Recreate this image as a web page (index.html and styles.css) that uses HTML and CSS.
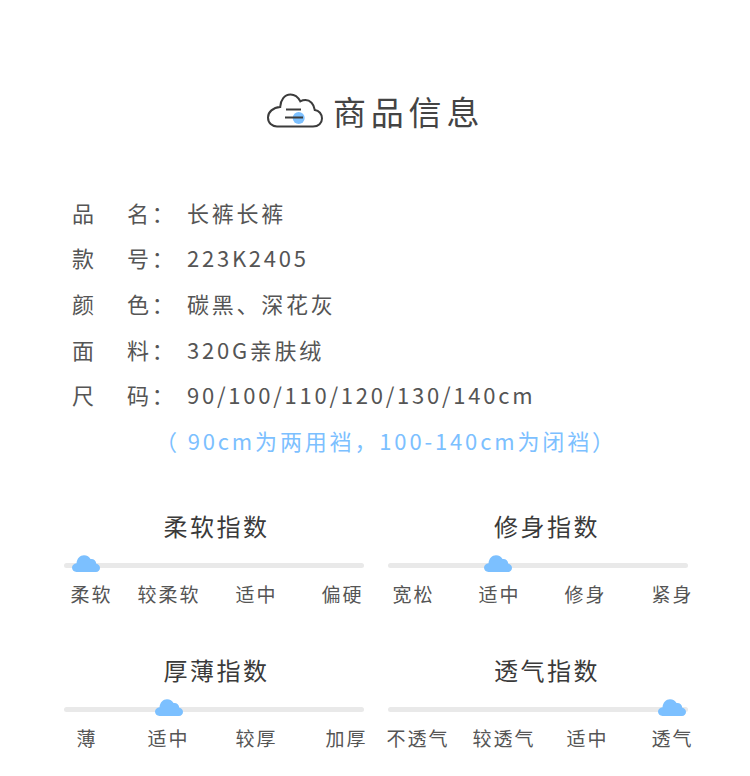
FILE: index.html
```html
<!DOCTYPE html>
<html lang="zh">
<head>
<meta charset="utf-8">
<title>商品信息</title>
<link rel="stylesheet" href="styles.css">
</head>
<body>
<main class="page">
  <header class="heading">
    <svg class="heading-icon" viewBox="0 0 56 36" width="56" height="36" aria-hidden="true">
      <circle cx="31.700" cy="25" r="6" fill="#7cc0ff"/>
      <path d="M10 33.500H46C51.500 33.500 55 30 55 25.500C55 21 52 17.500 47.800 17C47 11 43 7 38.500 7C36.500 7 34.800 7.500 33.300 8.300C31 4 27.500 1.500 23.500 1.500C17.500 1.500 13.500 7 13.200 14C6 14.500 1 19 1 24.500C1 30 5 33.500 10 33.500Z" fill="none" stroke="#3c3c3c" stroke-width="2"/>
      <path d="M19 16.500H34M18 24.500H36" fill="none" stroke="#3c3c3c" stroke-width="2"/>
    </svg>
    <h1 class="heading-text">商品信息</h1>
  </header>

  <dl class="specs">
    <div class="spec"><dt class="spec-label"><span>品</span><span>名：</span></dt><dd class="spec-value">长裤长裤</dd></div>
    <div class="spec"><dt class="spec-label"><span>款</span><span>号：</span></dt><dd class="spec-value">223K2405</dd></div>
    <div class="spec"><dt class="spec-label"><span>颜</span><span>色：</span></dt><dd class="spec-value">碳黑、深花灰</dd></div>
    <div class="spec"><dt class="spec-label"><span>面</span><span>料：</span></dt><dd class="spec-value">320G亲肤绒</dd></div>
    <div class="spec"><dt class="spec-label"><span>尺</span><span>码：</span></dt><dd class="spec-value">90/100/110/120/130/140cm</dd></div>
  </dl>
  <p class="note">（ 90cm为两用裆，100-140cm为闭裆）</p>

  <section class="indices">
    <div class="index index-left">
      <h2 class="index-title">柔软指数</h2>
      <div class="track">
        <svg class="cloud cloud-soft" viewBox="0 0 28 17" aria-hidden="true"><path d="M4.500 17C2 17 0 15 0 12.800C0 10.300 2 8.500 4.500 8.300C5 3.500 8 0.300 12 0.300C15 0.300 17.300 2 18.500 4C21.500 3.500 24 5.500 24.300 8.800C26.500 9.300 28 11 28 13C28 15.200 26.300 17 24 17Z" fill="#7cc0ff"/></svg>
      </div>
      <div class="scale scale-soft"><span>柔软</span><span>较柔软</span><span>适中</span><span>偏硬</span></div>
    </div>
    <div class="index index-right">
      <h2 class="index-title">修身指数</h2>
      <div class="track">
        <svg class="cloud cloud-fit" viewBox="0 0 28 17" aria-hidden="true"><path d="M4.500 17C2 17 0 15 0 12.800C0 10.300 2 8.500 4.500 8.300C5 3.500 8 0.300 12 0.300C15 0.300 17.300 2 18.500 4C21.500 3.500 24 5.500 24.300 8.800C26.500 9.300 28 11 28 13C28 15.200 26.300 17 24 17Z" fill="#7cc0ff"/></svg>
      </div>
      <div class="scale scale-fit"><span>宽松</span><span>适中</span><span>修身</span><span>紧身</span></div>
    </div>
    <div class="index index-left">
      <h2 class="index-title">厚薄指数</h2>
      <div class="track">
        <svg class="cloud cloud-thick" viewBox="0 0 28 17" aria-hidden="true"><path d="M4.500 17C2 17 0 15 0 12.800C0 10.300 2 8.500 4.500 8.300C5 3.500 8 0.300 12 0.300C15 0.300 17.300 2 18.500 4C21.500 3.500 24 5.500 24.300 8.800C26.500 9.300 28 11 28 13C28 15.200 26.300 17 24 17Z" fill="#7cc0ff"/></svg>
      </div>
      <div class="scale scale-thick"><span>薄</span><span>适中</span><span>较厚</span><span>加厚</span></div>
    </div>
    <div class="index index-right">
      <h2 class="index-title">透气指数</h2>
      <div class="track">
        <svg class="cloud cloud-air" viewBox="0 0 28 17" aria-hidden="true"><path d="M4.500 17C2 17 0 15 0 12.800C0 10.300 2 8.500 4.500 8.300C5 3.500 8 0.300 12 0.300C15 0.300 17.300 2 18.500 4C21.500 3.500 24 5.500 24.300 8.800C26.500 9.300 28 11 28 13C28 15.200 26.300 17 24 17Z" fill="#7cc0ff"/></svg>
      </div>
      <div class="scale scale-air"><span>不透气</span><span>较透气</span><span>适中</span><span>透气</span></div>
    </div>
  </section>
</main>
</body>
</html>
```
FILE: styles.css
```css
* { box-sizing: border-box; margin: 0; padding: 0; }
html, body { background: #fff; }
body {
  font-family: "Noto Sans CJK SC", "Noto Sans", sans-serif;
  font-weight: 400;
  color: #555;
  overflow: hidden;
}
.page { width: 750px; height: 776px; overflow: hidden; padding-top: 91px; }
.heading { display: flex; align-items: center; gap: 10px; padding-left: 267px; height: 40px; }
.heading-icon { flex: none; }
.heading-text { font-size: 33px; font-weight: 400; letter-spacing: 4.800px; line-height: 40px; color: #444; white-space: nowrap; }
.specs { margin-top: 58px; padding-left: 72px; }
.spec { display: flex; height: 45.600px; align-items: center; font-size: 22px; letter-spacing: 2.750px; }
.spec-label { display: grid; grid-template-columns: 55px auto; width: 115px; flex: none; }
.spec-value { white-space: nowrap; }
.note { height: 46px; line-height: 46px; font-size: 22px; letter-spacing: 2.850px; color: #7cc0ff; padding-left: 155px; white-space: nowrap; }
.indices { display: grid; grid-template-columns: 300px 300px; column-gap: 24px; margin: 43px 0 0 64px; }
.index { height: 144px; }
.index-title { height: 40px; line-height: 40px; font-size: 24px; font-weight: 400; letter-spacing: 2.500px; color: #3a3a3a; text-align: center; white-space: nowrap; }
.index-left .index-title { padding-left: 5px; }
.index-right .index-title { padding-left: 18px; }
.track { position: relative; height: 5px; margin-top: 17px; background: #e9e9e9; border-radius: 3px; }
.cloud { position: absolute; width: 28px; height: 17px; top: -8px; }
.cloud-soft { left: 8px; }
.cloud-fit { left: 96px; }
.cloud-thick { left: 91px; }
.cloud-air { left: 270px; }
.scale { display: grid; margin-top: 14px; font-size: 19px; letter-spacing: 2px; line-height: 24px; white-space: nowrap; }
.scale-soft { grid-template-columns: 67px 98px 86px auto; padding-left: 6.500px; }
.scale-fit { grid-template-columns: 86px 86px 87px auto; padding-left: 4.500px; }
.scale-thick { grid-template-columns: 71px 88px 90px auto; padding-left: 12.500px; }
.scale-air { grid-template-columns: 86px 94px 85px auto; margin-left: -1.500px; }
```
